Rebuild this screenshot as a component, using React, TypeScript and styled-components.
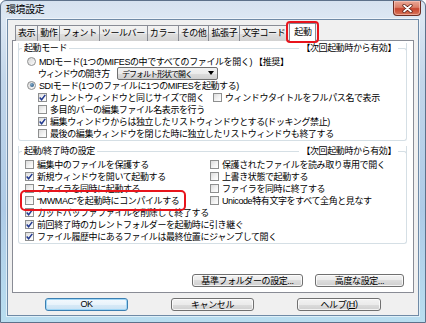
import React from 'react'
import styled, {createGlobalStyle, css} from 'styled-components'

const GlobalStyle = createGlobalStyle`
    html, body {
        margin: 0;
        padding: 0;
        background: #fff;
    }
    body {
        font-family: "Liberation Sans", "Noto Sans CJK JP", sans-serif;
        font-size: 9px;
        letter-spacing: -0.4px;
        color: #000;
    }
`

const Window = styled.div`
    width: 426px;
    height: 323px;
    box-sizing: border-box;
    display: flex;
    flex-direction: column;
    border: 1px solid #5d718a;
    border-radius: 6px 6px 0 0;
    background: linear-gradient(180deg, #d6e2ef 0%, #dce7f3 5%, #c2d6ea 25%, #aecbe7 65%, #b9def0 100%);
    overflow: hidden;
`

const TitleBar = styled.div`
    height: 18px;
    flex: none;
    display: flex;
    align-items: flex-start;
    justify-content: space-between;
    padding: 0 4px 0 5px;
`

const Title = styled.span`
    font-size: 10px;
    line-height: 18px;
`

const CloseButton = styled.div`
    width: 28px;
    height: 15px;
    box-sizing: border-box;
    border: 1px solid #6d2e24;
    border-top: none;
    border-radius: 0 0 4px 4px;
    background: linear-gradient(180deg, #e9a897 0%, #dc7f69 45%, #c8452e 55%, #d7765a 100%);
    box-shadow: inset 0 0 0 1px rgba(255, 210, 200, 0.55);
    display: flex;
    align-items: center;
    justify-content: center;
`

const Client = styled.div`
    flex: 1;
    margin: 0 6px 6px 6px;
    background: #f0f0f0;
    border: 1px solid #6f8aa6;
    box-shadow: 0 0 0 1px rgba(255, 255, 255, 0.55);
    display: flex;
    flex-direction: column;
    padding: 3px 4px 0 4px;
`

const TabStrip = styled.div`
    display: flex;
    align-items: flex-end;
    height: 18px;
    padding-left: 3px;
    margin-bottom: -1px;
    position: relative;
    z-index: 1;
`

const Tab = styled.div<{ $active?: boolean }>`
    height: 15px;
    line-height: 15px;
    padding: 0 2px;
    margin-right: -1px;
    border: 1px solid #898c95;
    border-bottom: none;
    background: linear-gradient(180deg, #f3f3f3 0%, #ebebeb 50%, #dedede 50%, #d2d2d2 100%);
    white-space: nowrap;
    position: relative;

    ${(p) => p.$active && css`
        height: 17px;
        line-height: 17px;
        background: #fff;
        margin-left: 2px;
        padding: 0 4px;
        z-index: 2;

        &::after {
            content: '';
            position: absolute;
            left: -4px;
            right: -4px;
            top: -3px;
            bottom: -2px;
            border: 2px solid #e8141c;
            border-radius: 4px;
        }
    `}
`

const Panel = styled.div`
    flex: 1;
    background: #fff;
    border: 1px solid #898c95;
    display: flex;
    flex-direction: column;
    padding: 2px 6px 5px 5px;
`

const Group = styled.div<{ $gap?: number }>`
    border: 1px solid #d5dfe5;
    border-top: none;
    border-radius: 0 0 3px 3px;
    padding-bottom: 1px;
    margin-top: ${(p) => p.$gap ?? 0}px;
`

const GroupHead = styled.div`
    display: flex;
    align-items: center;
    height: 10px;
    line-height: 10px;
    margin: 0 -1px 2px -1px;
`

const HeadLine = styled.div<{ $edge?: 'left' | 'right'; $w?: number }>`
    align-self: flex-end;
    height: 5px;
    box-sizing: border-box;
    border-top: 1px solid #d5dfe5;
    ${(p) => (p.$w ? css`width: ${p.$w}px;` : css`flex: 1;`)}
    ${(p) => p.$edge === 'left' && css`
        border-left: 1px solid #d5dfe5;
        border-top-left-radius: 3px;
    `}
    ${(p) => p.$edge === 'right' && css`
        border-right: 1px solid #d5dfe5;
        border-top-right-radius: 3px;
    `}
`

const HeadText = styled.span`
    padding: 0 2px;
    white-space: nowrap;
`

const Row = styled.div<{ $indent: number }>`
    display: flex;
    align-items: center;
    height: 12px;
    padding-left: ${(p) => p.$indent}px;
    white-space: nowrap;
`

const Cell = styled.div<{ $w?: number }>`
    display: flex;
    align-items: center;
    gap: 3px;
    ${(p) => p.$w && css`width: ${p.$w}px;`}
`

const Marked = styled(Cell)`
    position: relative;

    &::after {
        content: '';
        position: absolute;
        left: -5px;
        right: -7px;
        top: -4px;
        bottom: -4px;
        border: 2px solid #e8141c;
        border-radius: 5px;
    }
`

const Box = styled.span`
    width: 9px;
    height: 9px;
    flex: none;
    box-sizing: border-box;
    border: 1px solid #8e8f8f;
    background: linear-gradient(135deg, #dcdcdc 0%, #f4f4f4 60%, #fff 100%);
    display: flex;
    align-items: center;
    justify-content: center;
`

const RadioDot = styled.span<{ $on?: boolean }>`
    width: 9px;
    height: 9px;
    flex: none;
    box-sizing: border-box;
    border-radius: 50%;
    border: 1px solid #8e8f8f;
    background: linear-gradient(135deg, #d8d8d8 0%, #fafafa 100%);
    display: flex;
    align-items: center;
    justify-content: center;

    &::after {
        content: '';
        width: 4px;
        height: 4px;
        border-radius: 50%;
        background: ${(p) => (p.$on ? 'radial-gradient(circle at 35% 35%, #7fa8c8, #1f4e78)' : 'transparent')};
    }
`

const FieldLabel = styled.span`
    width: 79px;
    flex: none;
    letter-spacing: -1.1px;
`

const Select = styled.div`
    width: 101px;
    height: 13px;
    box-sizing: border-box;
    border: 1px solid #707070;
    border-radius: 2px;
    background: linear-gradient(180deg, #f2f2f2 0%, #ebebeb 50%, #dddddd 50%, #cfcfcf 100%);
    display: flex;
    align-items: center;
    justify-content: space-between;
    padding: 0 3px 0 4px;
    font-size: 8px;
    letter-spacing: -1px;
`

const Columns = styled.div`
    display: grid;
    grid-template-columns: 185px 1fr;
    padding-left: 6px;
`

const Stack = styled.div`
    display: flex;
    flex-direction: column;
`

const StackRow = styled.div`
    display: flex;
    align-items: center;
    height: 12px;
    white-space: nowrap;
`

const PanelButtons = styled.div`
    margin-top: auto;
    display: flex;
    justify-content: flex-end;
    gap: 12px;
    padding-right: 3px;
`

const Button = styled.div<{ $w: number; $default?: boolean }>`
    width: ${(p) => p.$w}px;
    height: 13px;
    box-sizing: border-box;
    border: 1px solid #707070;
    border-radius: 3px;
    background: linear-gradient(180deg, #f2f2f2 0%, #ebebeb 50%, #dddddd 50%, #cfcfcf 100%);
    box-shadow: inset 0 0 0 1px rgba(255, 255, 255, 0.75);
    display: flex;
    align-items: center;
    justify-content: center;
    white-space: nowrap;

    ${(p) => p.$default && css`
        border-color: #3c7fb1;
        background: linear-gradient(180deg, #f4f9fd 0%, #e8f3fb 50%, #d8eaf7 50%, #cbe2f3 100%);
        box-shadow: inset 0 0 0 1px #9fd6f6;
    `}
`

const Footer = styled.div`
    height: 22px;
    display: flex;
    align-items: center;
    justify-content: center;
    gap: 43px;
`

const Check = ({checked, children}: { checked?: boolean; children: React.ReactNode }) => (
    <>
        <Box>
            {checked && (
                <svg width="7" height="7" viewBox="0 0 7 7">
                    <path d="M0.7 3.5 L2.6 5.7 L6.3 0.9" fill="none" stroke="#21398f" strokeWidth="1.5"/>
                </svg>
            )}
        </Box>
        <span>{children}</span>
    </>
)

const Radio = ({on, children}: { on?: boolean; children: React.ReactNode }) => (
    <Cell>
        <RadioDot $on={on}/>
        <span>{children}</span>
    </Cell>
)

const Head = ({title}: { title: string }) => (
    <GroupHead>
        <HeadLine $edge="left" $w={4}/>
        <HeadText>{title}</HeadText>
        <HeadLine/>
        <HeadText>【次回起動時から有効】</HeadText>
        <HeadLine $edge="right" $w={9}/>
    </GroupHead>
)

const leftItems: [string, boolean][] = [
    ['編集中のファイルを保護する', false],
    ['新規ウィンドウを開いて起動する', true],
    ['ファイラを同時に起動する', false],
    ['“MWMAC”を起動時にコンパイルする', false],
    ['カットバッファファイルを削除して終了する', true],
    ['前回終了時のカレントフォルダーを起動時に引き継ぐ', true],
    ['ファイル履歴中にあるファイルは最終位置にジャンプして開く', true],
]

const rightItems = [
    '保護されたファイルを読み取り専用で開く',
    '上書き状態で起動する',
    'ファイラを同時に終了する',
    'Unicode特有文字をすべて全角と見なす',
]

const tabs = ['表示', '動作', 'フォント', 'ツールバー', 'カラー', 'その他', '拡張子', '文字コード']

export default function App() {
    return (
        <>
            <GlobalStyle/>
            <Window>
                <TitleBar>
                    <Title>環境設定</Title>
                    <CloseButton>
                        <svg width="11" height="9" viewBox="0 0 11 9">
                            <path d="M2 1.5 L9 7.5 M9 1.5 L2 7.5" stroke="#5a1c12" strokeWidth="3.2" strokeLinecap="round"/>
                            <path d="M2 1.5 L9 7.5 M9 1.5 L2 7.5" stroke="#fff" strokeWidth="1.7" strokeLinecap="round"/>
                        </svg>
                    </CloseButton>
                </TitleBar>
                <Client>
                    <TabStrip>
                        {tabs.map((t) => (
                            <Tab key={t}>{t}</Tab>
                        ))}
                        <Tab $active>起動</Tab>
                    </TabStrip>
                    <Panel>
                        <Group $gap={0}>
                            <Head title="起動モード"/>
                            <Row $indent={8}>
                                <Radio>MDIモード(1つのMIFESの中ですべてのファイルを開く) 【推奨】</Radio>
                            </Row>
                            <Row $indent={19}>
                                <FieldLabel>ウィンドウの開き方</FieldLabel>
                                <Select>
                                    <span>デフォルト形状で開く</span>
                                    <svg width="6" height="4" viewBox="0 0 6 4">
                                        <path d="M0 0 H6 L3 4 Z" fill="#000"/>
                                    </svg>
                                </Select>
                            </Row>
                            <Row $indent={8}>
                                <Radio on>SDIモード(1つのファイルに1つのMIFESを起動する)</Radio>
                            </Row>
                            <Row $indent={19}>
                                <Cell $w={175}>
                                    <Check checked>カレントウィンドウと同じサイズで開く</Check>
                                </Cell>
                                <Cell>
                                    <Check>ウィンドウタイトルをフルパス名で表示</Check>
                                </Cell>
                            </Row>
                            <Row $indent={19}>
                                <Cell><Check>多目的バーの編集ファイル名表示を行う</Check></Cell>
                            </Row>
                            <Row $indent={19}>
                                <Cell><Check checked>編集ウィンドウからは独立したリストウィンドウとする(ドッキング禁止)</Check></Cell>
                            </Row>
                            <Row $indent={19}>
                                <Cell><Check>最後の編集ウィンドウを閉じた時に独立したリストウィンドウも終了する</Check></Cell>
                            </Row>
                        </Group>
                        <Group $gap={5}>
                            <Head title="起動/終了時の設定"/>
                            <Columns>
                                <Stack>
                                    {leftItems.map(([label, on]) => (
                                        <StackRow key={label}>
                                            {label.startsWith('“') ? (
                                                <Marked><Check checked={on}>{label}</Check></Marked>
                                            ) : (
                                                <Cell><Check checked={on}>{label}</Check></Cell>
                                            )}
                                        </StackRow>
                                    ))}
                                </Stack>
                                <Stack>
                                    {rightItems.map((label) => (
                                        <StackRow key={label}>
                                            <Cell><Check>{label}</Check></Cell>
                                        </StackRow>
                                    ))}
                                </Stack>
                            </Columns>
                        </Group>
                        <PanelButtons>
                            <Button $w={111}>基準フォルダーの設定...</Button>
                            <Button $w={89}>高度な設定...</Button>
                        </PanelButtons>
                    </Panel>
                    <Footer>
                        <Button $w={83} $default>OK</Button>
                        <Button $w={83}>キャンセル</Button>
                        <Button $w={84}>ヘルプ(<u>H</u>)</Button>
                    </Footer>
                </Client>
            </Window>
        </>
    )
}
